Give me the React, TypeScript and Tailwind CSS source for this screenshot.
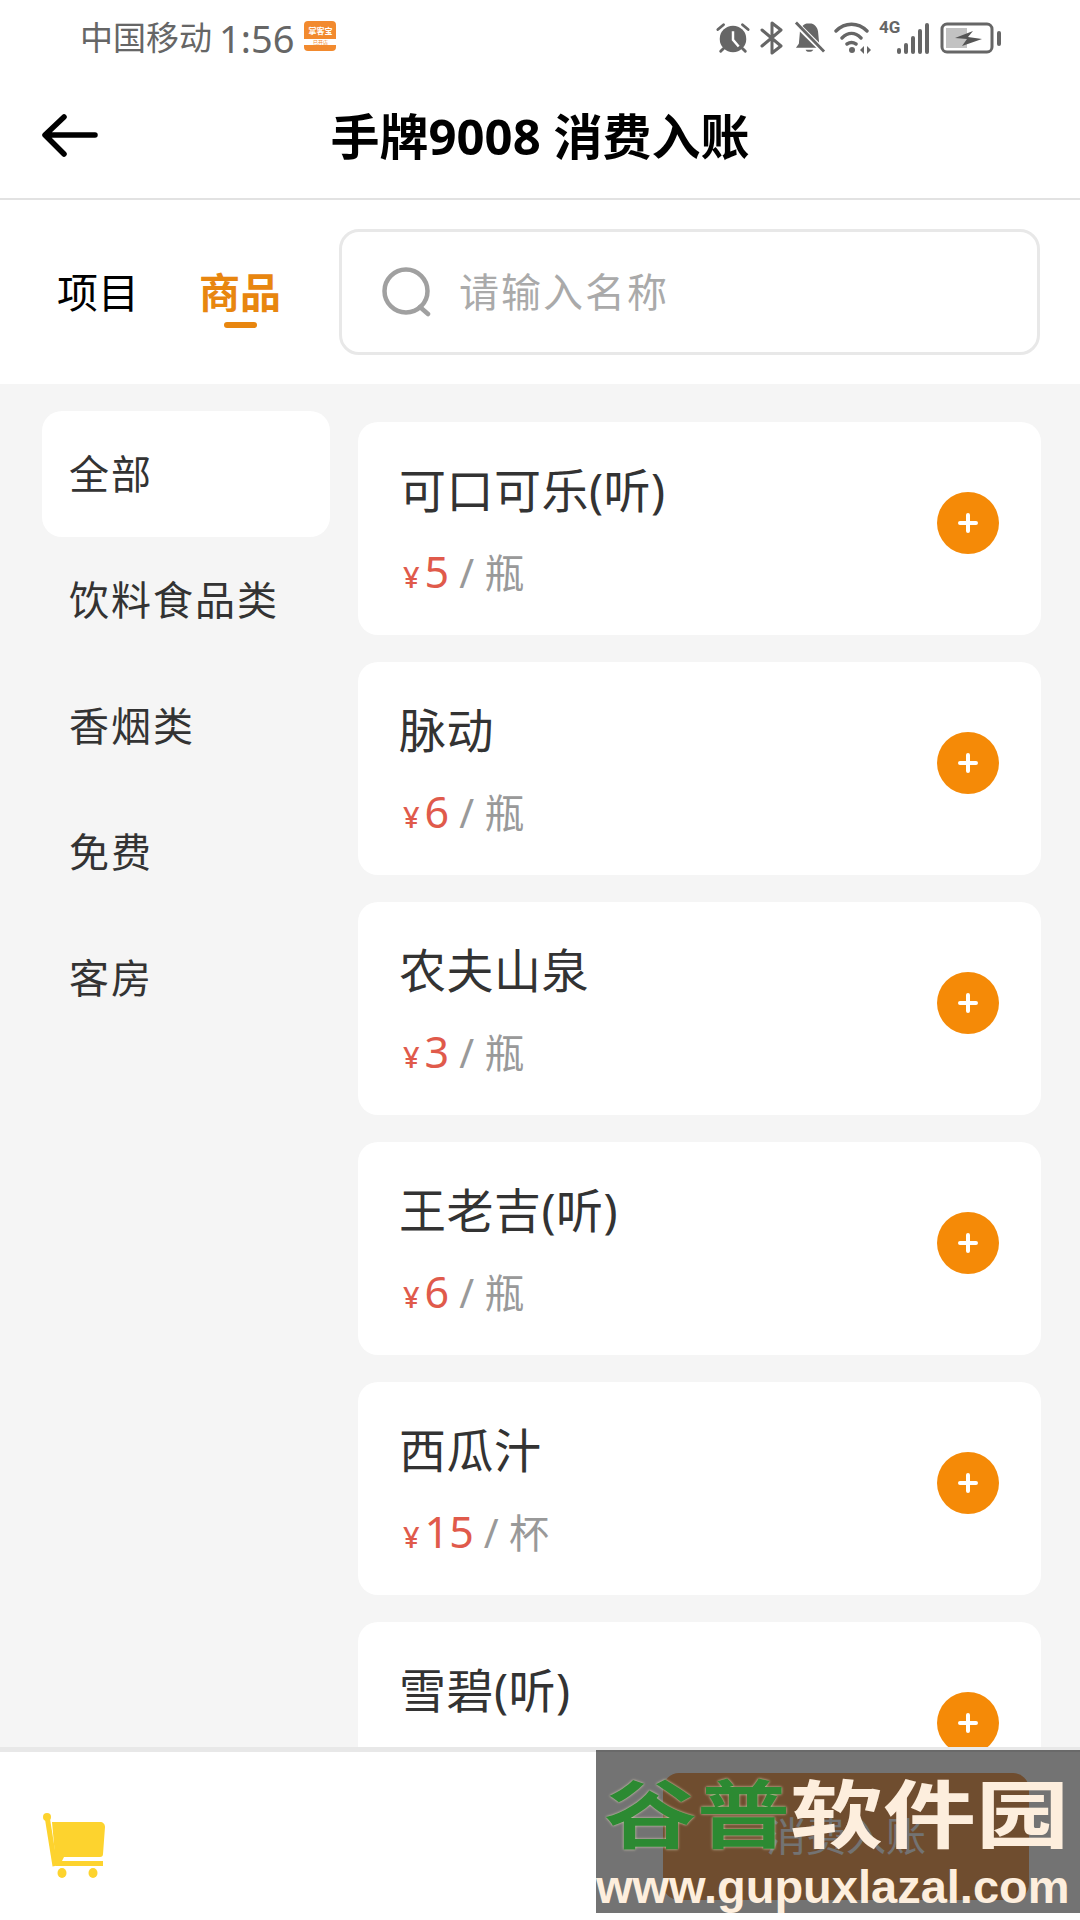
import React from 'react';

const goods = [
  { name: '可口可乐(听)', price: '5', unit: '瓶' },
  { name: '脉动', price: '6', unit: '瓶' },
  { name: '农夫山泉', price: '3', unit: '瓶' },
  { name: '王老吉(听)', price: '6', unit: '瓶' },
  { name: '西瓜汁', price: '15', unit: '杯' },
  { name: '雪碧(听)', price: '3', unit: '听' },
];

const categories = ['全部', '饮料食品类', '香烟类', '免费', '客房'];

const StatusIcons = () => (
  <div className="flex items-center h-[40px] text-[#666]">
    {/* alarm */}
    <svg width="36" height="34" viewBox="0 0 38 34" fill="currentColor">
      <circle cx="19" cy="18" r="14" />
      <path d="M19 10v9l6 7" stroke="#fff" strokeWidth="2.6" fill="none" />
      <path d="M3 8l6-5M35 8l-6-5M6 31l3-3M32 31l-3-3" stroke="currentColor" strokeWidth="3" strokeLinecap="round" />
    </svg>
    {/* bluetooth */}
    <svg width="24" height="34" viewBox="0 0 24 34" fill="none" stroke="currentColor" strokeWidth="3" strokeLinejoin="round" strokeLinecap="round" className="ml-[9px]">
      <path d="M2 9l19 16-9 7V2l9 7L2 25" />
    </svg>
    {/* bell off */}
    <svg width="31" height="34" viewBox="0 0 32 34" className="ml-[10px]">
      <path d="M13 2h5c4 1 7 5 7 10l1 11 3 4H2l3-4 1-11c0-5 3-9 7-10z" fill="currentColor" />
      <path d="M12 29c1 3 6 3 8 0z" fill="currentColor" />
      <path d="M2 2l29 29" stroke="#fff" strokeWidth="6" />
      <path d="M2 1l29 30" stroke="currentColor" strokeWidth="3" />
    </svg>
    {/* wifi */}
    <svg width="38" height="34" viewBox="0 0 38 34" fill="none" stroke="currentColor" strokeWidth="3.4" strokeLinecap="round" className="ml-[9px]">
      <path d="M2 10c9-9 22-9 31 0M8 17c6-6 13-6 19 0M13 23c3-2 6-2 9 0" />
      <circle cx="18" cy="29" r="3" fill="currentColor" stroke="none" />
      <path d="M30 25l-4 4 4 4zM33 25l4 4-4 4z" fill="currentColor" stroke="none" />
    </svg>
    <div className="relative w-[52px] h-[34px] ml-[7px]">
      <span className="absolute left-0 top-[-3px] text-[17px] leading-[18px] font-bold font-['Roboto',sans-serif]">4G</span>
      <svg width="52" height="34" viewBox="0 0 52 34" fill="currentColor" className="absolute inset-0">
        <rect x="18" y="27" width="4" height="6" rx="2" />
        <rect x="25" y="22" width="4" height="11" rx="2" />
        <rect x="32" y="15" width="4" height="18" rx="2" />
        <rect x="39" y="8" width="4" height="25" rx="2" />
        <rect x="46" y="2" width="4" height="31" rx="2" />
      </svg>
    </div>
    {/* battery */}
    <svg width="62" height="34" viewBox="0 0 62 34" className="ml-[9px]">
      <rect x="2" y="3" width="50" height="28" rx="5" fill="none" stroke="currentColor" strokeWidth="3" />
      <rect x="6" y="7" width="21" height="20" fill="#c2c2c2" />
      <path d="M15 17l18-7-5 6 14 2-20 7 5-7z" fill="#555" />
      <rect x="57" y="10" width="4" height="15" rx="2" fill="currentColor" />
    </svg>
  </div>
);

const CartIcon = () => (
  <svg width="64" height="66" viewBox="0 0 64 66" fill="#fdd32e">
    <circle cx="5" cy="5" r="4" />
    <path d="M5 4l8 50" stroke="#fdd32e" strokeWidth="5" fill="none" />
    <path d="M10 10h48c3 0 5 2 5 5l-2 27c0 2-1 3-3 3H22l-2 4h41v5H14z" />
    <ellipse cx="20" cy="61" rx="4.5" ry="5" />
    <ellipse cx="51" cy="61" rx="4.5" ry="5" />
  </svg>
);

const App: React.FC = () => {
  return (
    <div className="relative w-[1080px] h-[1920px] flex flex-col overflow-hidden bg-white font-['Noto_Sans','Noto_Sans_CJK_SC',sans-serif]">
      {/* status bar */}
      <div className="h-[75px] shrink-0 flex items-center justify-between pl-[80px] pr-[78px]">
        <div className="flex items-center text-[#666] text-[33px] leading-[40px]">
          <span>中国移动</span>
          <span className="ml-[7px] text-[38px]">1:56</span>
          <div className="ml-[10px] mb-[4px] w-[32px] h-[30px] rounded-[4px] bg-[#f28a2e] flex flex-col items-center justify-center overflow-hidden">
            <span className="text-[8px] leading-[10px] text-white font-bold">掌客宝</span>
            <span className="mt-[3px] w-full bg-white text-[5px] leading-[6px] text-center text-[#f28a2e]">已开店</span>
          </div>
        </div>
        <StatusIcons />
      </div>

      {/* title bar */}
      <div className="relative h-[125px] shrink-0 flex items-center justify-center border-b-[2px] border-[#e2e2e2]">
        <button className="absolute left-[42px] top-[39px]">
          <svg width="56" height="44" viewBox="0 0 56 44" fill="none" stroke="#000" strokeWidth="5.5" strokeLinecap="round" strokeLinejoin="round">
            <path d="M53 21H4M22 3L3 21l19 19" />
          </svg>
        </button>
        <h1 className="text-[49px] leading-[60px] font-bold text-black mb-[2px]">手牌9008 消费入账</h1>
      </div>

      {/* tabs and search */}
      <div className="h-[184px] shrink-0 flex items-center pl-[57px] pr-[40px]">
        <span className="text-[41px] leading-[50px] text-black">项目</span>
        <div className="relative ml-[60px]">
          <span className="text-[41px] leading-[50px] font-bold text-[#e8860f]">商品</span>
          <span className="absolute left-[25px] top-[55px] w-[33px] h-[6px] rounded-full bg-[#e8860f]" />
        </div>
        <div className="ml-[58px] flex-1 h-[126px] rounded-[20px] border-[3px] border-[#e8e8e8] flex items-center pl-[40px]">
          <svg width="50" height="50" viewBox="0 0 50 50" fill="none" stroke="#a0a0a0" strokeWidth="4.5">
            <circle cx="24" cy="24" r="21.5" />
            <path d="M38 40l8 7" strokeLinecap="round" />
          </svg>
          <span className="ml-[27px] text-[40px] leading-[50px] tracking-[2px] text-[#aaaaaa]">请输入名称</span>
        </div>
      </div>

      {/* content */}
      <div className="flex-1 min-h-0 flex bg-[#f5f5f5] overflow-hidden">
        <div className="w-[358px] shrink-0 pt-[27px] pl-[42px] pr-[28px]">
          {categories.map((c, i) => (
            <div
              key={c}
              className={`h-[126px] flex items-center pl-[27px] text-[40px] tracking-[2px] text-[#333] ${i === 0 ? 'bg-white rounded-[20px]' : ''}`}
            >
              {c}
            </div>
          ))}
        </div>
        <div className="flex-1 pt-[38px] pr-[39px] flex flex-col gap-[27px]">
          {goods.map((g) => (
            <div key={g.name} className="h-[213px] shrink-0 bg-white rounded-[20px] flex items-center justify-between pl-[41px] pr-[42px]">
              <div className="pt-[4px]">
                <div className="text-[47px] leading-[60px] tracking-[0.5px] text-[#333]">{g.name}</div>
                <div className="mt-[28px] flex items-baseline leading-[48px]">
                  <span className="ml-[4px] text-[29px] text-[#e05a4b] font-medium">¥</span>
                  <span className="ml-[5px] text-[43px] text-[#e05a4b]">{g.price}</span>
                  <span className="ml-[10px] text-[40px] text-[#999]">/ {g.unit}</span>
                </div>
              </div>
              <button className="mb-[12px] w-[62px] h-[62px] rounded-full bg-[#f58a07] flex items-center justify-center">
                <svg width="22" height="22" viewBox="0 0 22 22" stroke="#fff" strokeWidth="4" strokeLinecap="round">
                  <path d="M11 3v16M3 11h16" />
                </svg>
              </button>
            </div>
          ))}
        </div>
      </div>

      {/* bottom bar */}
      <div className="h-[173px] shrink-0 bg-white border-t-[5px] border-[#e8e8e8] flex items-center justify-between pl-[42px] pr-[51px]">
        <div className="mt-[18px]">
          <CartIcon />
        </div>
        <button className="w-[366px] h-[127px] rounded-[16px] bg-[#f7ab68] text-white text-[40px]">消费入账</button>
      </div>

      {/* watermark */}
      <div className="absolute left-[596px] top-[1750px] w-[484px] h-[163px] bg-black/55 pt-[18px] overflow-hidden">
        <div className="flex pl-[8px] text-[93px] leading-[90px] font-bold text-[#fdeedd] whitespace-nowrap scale-y-[0.8]">
          <span className="text-[#2c8a32] [text-shadow:0_0_3px_#e8dcc0]">谷普</span>
          <span>软件园</span>
        </div>
        <div className="mt-[7px] text-[47px] leading-[44px] font-bold text-[#fdeedd] whitespace-nowrap font-['Liberation_Sans',sans-serif]">www.gupuxlazal.com</div>
      </div>
    </div>
  );
};

export default App;
